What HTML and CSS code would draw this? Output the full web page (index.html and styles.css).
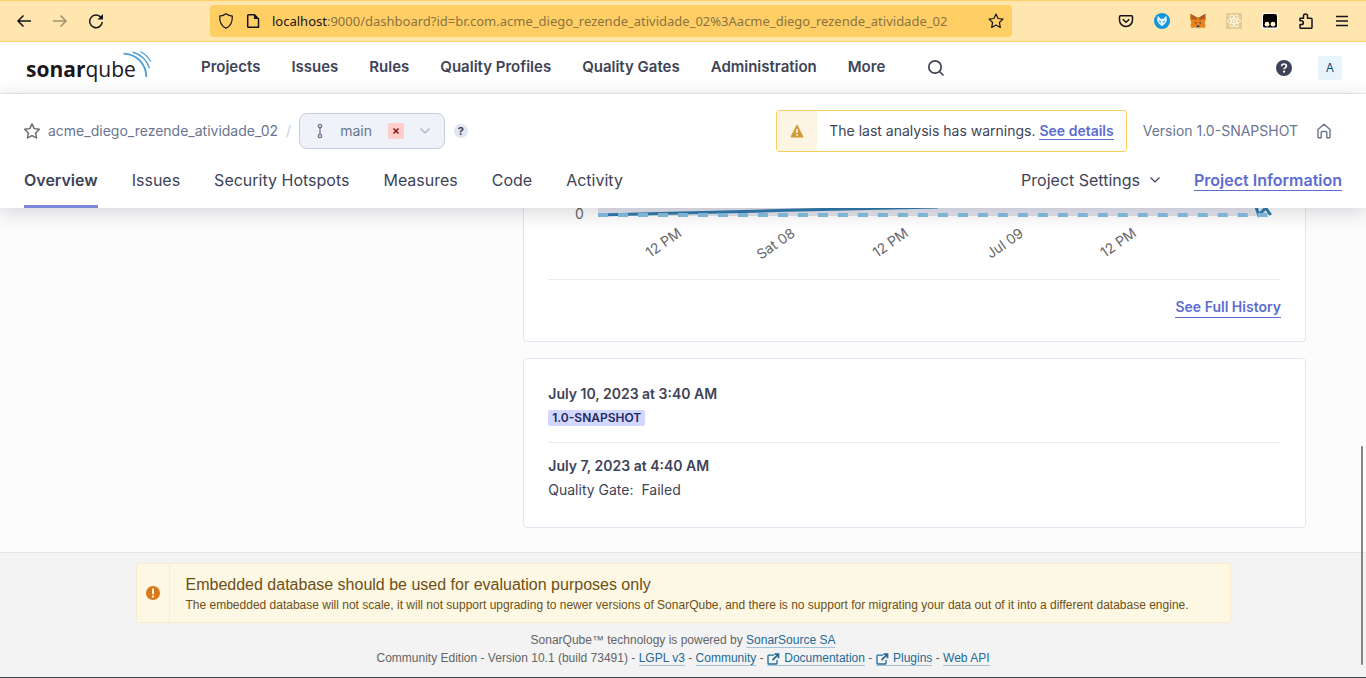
FILE: index.html
```html
<!DOCTYPE html>
<html lang="en">
<head>
<meta charset="utf-8">
<title>acme_diego_rezende_atividade_02</title>
<link rel="stylesheet" href="styles.css">
</head>
<body>
<div class="window">
  <div class="browser-bar">
    <div class="browser-nav">
      <button type="button" aria-label="Back"><svg width="16" height="16" viewBox="0 0 16 16"><path d="M15 8H2M7.500 2.500 2 8l5.500 5.500" class="line"/></svg></button>
      <button type="button" class="dim" aria-label="Forward"><svg width="16" height="16" viewBox="0 0 16 16"><path d="M1 8h13M8.500 2.500 14 8l-5.500 5.500" class="line"/></svg></button>
      <button type="button" aria-label="Reload"><svg width="16" height="16" viewBox="0 0 16 16"><path d="M13 4.500A6.300 6.300 0 1 0 14.300 9" class="line"/><path d="M15 1v5.500H9.500z" fill="currentColor"/></svg></button>
    </div>
    <div class="url-field">
      <svg width="16" height="18" viewBox="0 0 16 18"><path d="M8 1.700c2 1.500 4 2.200 6.300 2.400.3 5.500-1.600 10-6.300 12.200C3.300 14 1.400 9.600 1.700 4.100 4 3.900 6 3.200 8 1.700z" class="line thin"/></svg>
      <svg width="14" height="16" viewBox="0 0 14 16"><path d="M2.500 1.700h6l4 4v8.600h-10q-.8 0-.8-.8v-11q0-.8.800-.8z" class="line"/><path d="M8 1l5 5H8z" fill="currentColor"/></svg>
      <p class="url"><b>localhost</b>:9000/dashboard?id=br.com.acme_diego_rezende_atividade_02%3Aacme_diego_rezende_atividade_02</p>
      <button type="button" aria-label="Bookmark"><svg width="16" height="16" viewBox="0 0 16 16"><path d="M8 1l2.100 4.500 4.900.600-3.600 3.400.900 4.900L8 12l-4.300 2.400.9-4.900L1 6.100l4.900-.600z" class="line thin" stroke-linejoin="round"/></svg></button>
    </div>
    <div class="extensions">
      <button type="button" aria-label="Pocket"><svg width="16" height="16" viewBox="0 0 16 16"><path d="M2.500 2.700h11q1 0 1 1V7a6.500 6.500 0 0 1-13 0V3.700q0-1 1-1z" class="line"/><path d="M4.700 6.300 8 9.300l3.300-3" class="line"/></svg></button>
      <button type="button" aria-label="Blue fox extension"><svg width="16" height="16" viewBox="0 0 16 16"><circle cx="8" cy="8" r="8" fill="#1296db"/><path d="M3.800 2.800 6.500 5.800h3l2.700-3 .7 4.700-1.900 3.200L8 13.300l-3-2.600-1.900-3.200z" fill="#e3f3fc"/><path d="M5 8l2 1.300M11 8 9 9.300" stroke="#1296db"/></svg></button>
      <button type="button" aria-label="Wallet"><svg width="16" height="16" viewBox="0 0 16 16"><path d="M.5.800 6.200 4h3.600L15.500.8 16 6l-1.300 3.500.9 3-1.300 2.700-3.300-1-1 1H6l-1-1-3.300 1L.4 12.500l.9-3L0 6z" fill="#e8821e"/><path d="M.5.800 6.200 4 7 7 1.500 6zM15.500.8 9.800 4 9 7l5.500-1z" fill="#a85a26"/><path d="M5 9l2 .7-1.500 1zM11 9l-2 .7 1.500 1z" fill="#233447"/><path d="M6 12.500h4l-.3 2.500H6.300z" fill="#c0ad9e"/><path d="M6.600 12.500h2.800V14H6.600z" fill="#332b28"/></svg></button>
      <button type="button" aria-label="React tools"><svg width="16" height="16" viewBox="0 0 16 16"><path d="M0 0h16v16H0z" fill="#e3cd95"/><g fill="none" stroke="#fff7df"><ellipse cx="8" cy="8" rx="6.500" ry="2.500"/><ellipse cx="8" cy="8" rx="6.500" ry="2.500" transform="rotate(60 8 8)"/><ellipse cx="8" cy="8" rx="6.500" ry="2.500" transform="rotate(120 8 8)"/></g><circle cx="8" cy="8" r="1.300" fill="#fff7df"/></svg></button>
      <button type="button" aria-label="User scripts"><svg width="16" height="16" viewBox="0 0 16 16"><rect width="16" height="16" rx="2" fill="#fff"/><path d="M3 1h10q2 0 2 2v10q0 1.500-1.500 1.500h-11Q1 14.500 1 13V3q0-2 2-2z"/><circle cx="5" cy="11.200" r="2.400" fill="#fff3d0"/><circle cx="11" cy="11.200" r="2.400" fill="#fff3d0"/></svg></button>
      <button type="button" aria-label="Extensions"><svg width="16" height="16" viewBox="0 0 16 16"><path d="M2 5.300h3.500V3a2 2 0 0 1 4 0v2.300H13q1 0 1 1v8q0 1-1 1H2.800q-.8 0-.8-.8v-3h1.500a1.800 1.800 0 0 0 0-3.700H2z" class="line" stroke-linejoin="round"/></svg></button>
      <button type="button" aria-label="Menu"><svg width="16" height="16" viewBox="0 0 16 16"><path d="M2 3.500h12M2 8h12M2 12.500h12" class="line"/></svg></button>
    </div>
  </div>

  <header class="global-nav">
    <a class="logo" href="#" aria-label="SonarQube"><svg width="128" height="34" viewBox="-1 0 128 34"><text x="1" y="26" class="logo-text"><tspan class="logo-bold">sonar</tspan>qube</text><g fill="none" stroke="#4b9fd5"><path d="M98.500 2.600c13 .3 22.600 10 22.900 23.500" stroke-width="1.800"/><path d="M107.500 1c8.500 2.500 14.500 8.500 17 16.200" stroke-width="1.400"/><path d="M115.500.5c4.500 2.500 8 6 10.300 10.200" stroke-width="1.200"/></g></svg></a>
    <nav class="global-links">
      <a href="#">Projects</a><a href="#">Issues</a><a href="#">Rules</a><a href="#">Quality Profiles</a><a href="#">Quality Gates</a><a href="#">Administration</a><a href="#">More</a>
    </nav>
    <button type="button" class="search" aria-label="Search"><svg width="18" height="18" viewBox="0 0 18 18" fill="none" stroke="#3e4357" stroke-width="1.700"><circle cx="8" cy="8" r="6.200"/><path d="m12.500 12.500 4 4"/></svg></button>
    <div class="global-right">
      <button type="button" aria-label="Help"><svg width="16" height="16" viewBox="0 0 16 16"><circle cx="8" cy="8" r="8" fill="#3e4357"/><path d="M5.700 6.200C5.700 4.700 6.700 4 8 4s2.400.8 2.400 2.100c0 1.500-2.300 1.600-2.300 3.200" fill="none" stroke="#fff" stroke-width="1.700"/><circle cx="8.100" cy="11.700" r="1.100" fill="#fff"/></svg></button>
      <button type="button" class="avatar">A</button>
    </div>
  </header>

  <section class="project-header">
    <div class="project-row">
      <button type="button" class="favorite" aria-label="Favorite"><svg width="16" height="16" viewBox="0 0 16 16"><path d="M8 .900l2.200 4.700 5.100.700-3.700 3.600.9 5.100L8 12.600 3.500 15l.9-5.100L.7 6.300l5.100-.7z" fill="none" stroke="#666" stroke-width="1.400" stroke-linejoin="round"/></svg></button>
      <a class="project-name" href="#">acme_diego_rezende_atividade_02</a>
      <span class="slash">/</span>
      <button type="button" class="branch">
        <svg width="16" height="16" viewBox="0 0 16 16" fill="none" stroke="#6a7590" stroke-width="1.300"><circle cx="8" cy="3" r="1.700"/><circle cx="8" cy="13" r="1.700"/><path d="M8 4.700v6.600"/></svg>
        <span class="branch-name">main</span>
        <span class="failed"><svg width="8" height="8" viewBox="0 0 8 8"><path d="m1.500 1.500 5 5m0-5-5 5" stroke="#801b14" stroke-width="1.500"/></svg></span>
        <svg width="10" height="6" viewBox="0 0 10 6" fill="none" stroke="#a6adbf" stroke-width="1.200"><path d="m.5.500 4.500 4.500L9.500.5"/></svg>
      </button>
      <button type="button" class="hint" aria-label="Branch help">?</button>
      <div class="project-meta">
        <div class="warning"><span class="warning-icon"><svg width="14" height="14" viewBox="0 0 14 14"><path d="M7 1 13 13H1z" fill="#d29a35" stroke="#d29a35" stroke-linejoin="round"/><path d="M7 5v4M7 10.300v1.500" stroke="#fff" stroke-width="1.500"/></svg></span><p>The last analysis has warnings. <a class="link" href="#">See details</a></p></div>
        <span class="version">Version 1.0-SNAPSHOT</span>
        <button type="button" class="home" aria-label="Set as homepage"><svg width="16" height="16" viewBox="0 0 16 16"><path d="M2 6.500 8 1.200l6 5.300v7.700q0 .6-.6.6h-2.600V9.500q0-1-1-1H6.200q-1 0-1 1v5.300H2.600q-.6 0-.6-.6z" fill="none" stroke="#6a7590" stroke-width="1.400" stroke-linejoin="round"/></svg></button>
      </div>
    </div>
    <nav class="tabs">
      <a class="active" href="#">Overview</a><a href="#">Issues</a><a href="#">Security Hotspots</a><a href="#">Measures</a><a href="#">Code</a><a href="#">Activity</a>
      <div class="tabs-right">
        <button type="button">Project Settings <svg width="10" height="6" viewBox="0 0 10 6" fill="none" stroke="#3e4357" stroke-width="1.200"><path d="m.5.500 4.500 4.500L9.500.5"/></svg></button>
        <a class="link" href="#">Project Information</a>
      </div>
    </nav>
  </section>

  <main class="content">
    <div class="column">
      <section class="card history">
        <svg class="chart" viewBox="0 0 733 71" role="img" aria-label="Activity chart">
          <path d="M50 0h668v7H50z" fill="#e5e5f0"/>
          <path d="M50 7.500h668" stroke="#e1e1e1"/>
          <path d="M50 7Q170 4 240 2.300T390-1" fill="none" stroke="#2f7aaa" stroke-width="3"/>
          <path d="m708-2 3 9 7-7 5 7" fill="none" stroke="#2f7aaa" stroke-width="3"/>
          <path d="M50 7h670" stroke="#85bfe0" stroke-width="4" stroke-dasharray="10 10"/>
          <g class="tick"><text x="27" y="11">0</text>
          <text transform="translate(102 50) rotate(-35)">12 PM</text>
          <text transform="translate(213 52) rotate(-35)">Sat 08</text>
          <text transform="translate(329 50) rotate(-35)">12 PM</text>
          <text transform="translate(443 51) rotate(-35)">Jul 09</text>
          <text transform="translate(557 50) rotate(-35)">12 PM</text></g>
        </svg>
        <div class="history-link"><a class="link" href="#">See Full History</a></div>
      </section>
      <section class="card analyses">
        <article><h2>July 10, 2023 at 3:40 AM</h2><span class="tag">1.0-SNAPSHOT</span></article>
        <article><h2>July 7, 2023 at 4:40 AM</h2><p>Quality Gate: <span>Failed</span></p></article>
      </section>
    </div>
  </main>

  <footer class="footer">
    <div class="db-alert">
      <div class="db-icon"><svg width="14" height="14" viewBox="0 0 14 14"><circle cx="7" cy="7" r="7" fill="#db781a"/><path d="M7 2.500v5.700M7 9.500v2" stroke="#fff8e0" stroke-width="2"/></svg></div>
      <div class="db-text"><h2>Embedded database should be used for evaluation purposes only</h2><p>The embedded database will not scale, it will not support upgrading to newer versions of SonarQube, and there is no support for migrating your data out of it into a different database engine.</p></div>
    </div>
    <p class="foot-line">SonarQube™ technology is powered by <a href="#">SonarSource SA</a></p>
    <p class="foot-line">Community Edition - Version 10.1 (build 73491) - <a href="#">LGPL v3</a> - <a href="#">Community</a> - <a href="#"><svg width="14" height="12" viewBox="0 0 14 12"><use href="#external"/></svg> Documentation</a> - <a href="#"><svg width="14" height="12" viewBox="0 0 14 12"><g id="external" fill="none" stroke="#236a97" stroke-width="1.300"><path d="M7 2.200H1.700q-.7 0-.7.700v7.400q0 .7.700.7h7.600q.7 0 .7-.7V7"/><path d="M5.500 7.200 11 1.700M7.500 1.200h4v4" stroke-width="1.700"/></g></svg> Plugins</a> - <a href="#">Web API</a></p>
  </footer>
  <div class="scroll-thumb"></div>
</div>
</body>
</html>
```
FILE: styles.css
```css
* { box-sizing: border-box; }
body { margin: 0; background: #fcfcfd; color: #3e4357; font: 14px/20px Inter, sans-serif; }
h2, p { margin: 0; }
a { color: inherit; text-decoration: none; }
button { display: inline-flex; align-items: center; justify-content: center; padding: 0; border: 0; background: none; color: inherit; font: inherit; }
svg { display: block; flex: none; }
.window { position: relative; display: flex; flex-direction: column; min-height: 100vh; border-bottom: 1px solid #3e4357; }
.line { fill: none; stroke: currentColor; stroke-width: 1.5; }
.thin { stroke-width: 1.2; }

.browser-bar { display: flex; align-items: center; height: 42px; padding: 0 16px; border-top: 1px solid #ffcf66; border-bottom: 1px solid #ffcf66; background: #ffe6ae; color: #15141a; }
.browser-nav { display: flex; gap: 20px; width: 194px; }
.dim { opacity: .4; }
.url-field { display: flex; align-items: center; gap: 12px; flex: 0 1 802px; min-width: 0; height: 32px; padding: 0 8px; border-radius: 4px; background: #ffcf66; }
.url { flex: 1; overflow: hidden; white-space: nowrap; font: 400 13px/20px "Noto Sans", sans-serif; color: #8a7340; }
.url b { font-weight: 400; color: #15141a; }
.extensions { display: flex; gap: 20px; margin-left: auto; }

.global-nav { display: flex; align-items: center; height: 52px; padding: 0 24px; border-bottom: 1px solid #ebebeb; background: #fff; }
.logo { width: 177px; }
.logo-text { font: 21px "Open Sans", sans-serif; fill: #1b171b; }
.logo-bold { font-weight: 700; }
.global-links { display: flex; gap: 31px; padding-bottom: 2px; font-size: 15px; font-weight: 600; }
.search { margin-left: 42px; }
.global-right { display: flex; align-items: center; gap: 26px; margin-left: auto; }
.avatar { width: 24px; height: 24px; border-radius: 3px; background: #e8f4fb; color: #0b4f79; font-size: 12px; }

.project-header { position: relative; z-index: 1; padding: 16px 24px 0; background: #fff; box-shadow: 0 4px 20px rgba(29, 33, 47, .18); }
.project-row { display: flex; align-items: center; height: 42px; color: #6a7590; }
.project-name { margin-left: 8px; }
.slash { margin: 0 8px; color: #c5cdde; }
.branch { gap: 12px; height: 36px; padding: 0 14px 0 12px; border: 1px solid #c5cdde; border-radius: 8px; background: #eff2f9; }
.branch-name { margin: 0 4px 0 0; }
.failed { display: flex; align-items: center; justify-content: center; width: 16px; height: 16px; margin-right: 4px; border-radius: 2px; background: #ffcdca; }
.hint { width: 14px; height: 14px; margin-left: 9px; border-radius: 50%; background: #e1e6f3; color: #3e4357; font-size: 11px; font-weight: 700; }
.project-meta { display: flex; align-items: center; gap: 16px; margin-left: auto; padding-right: 8px; white-space: nowrap; }
.home { width: 20px; }
.warning { display: flex; align-items: center; height: 42px; padding-right: 12px; border: 1px solid #f8cf5f; border-radius: 3px; color: #3e4357; }
.warning-icon { display: flex; align-items: center; justify-content: center; width: 40px; height: 100%; margin-right: 12px; background: #fcf5e4; }
.link { border-bottom: 1px solid #5d6cd0; color: #5d6cd0; font-weight: 600; }
.tabs { display: flex; gap: 34px; height: 56px; font-size: 16px; line-height: 20px; }
.tabs > a { padding-top: 18px; }
.tabs .active { border-bottom: 3px solid #7b87d9; font-weight: 600; }
.tabs-right { display: flex; align-items: flex-start; gap: 34px; margin-left: auto; padding-top: 18px; }
.tabs-right button { gap: 10px; }

.content { flex: 1; display: grid; grid-template-columns: 4fr 7fr; gap: 16px; padding: 0 60px 24px; }
.column { grid-column: 2; display: flex; flex-direction: column; gap: 16px; }
.card { border: 1px solid #e1e6f3; border-radius: 4px; background: #fff; }
.history { padding: 0 24px 23px; border-top: 0; border-radius: 0 0 4px 4px; }
.chart { width: 100%; overflow: visible; }
.tick { font: 14px Inter, sans-serif; fill: #666; }
.history-link { display: flex; justify-content: flex-end; padding-top: 17px; border-top: 1px solid #ebebeb; }
.analyses { padding: 24px 24px 27px; }
.analyses article + article { margin-top: 16px; padding-top: 12px; border-top: 1px solid #ebebeb; }
.analyses h2 { font-size: 14px; line-height: 22px; font-weight: 600; }
.analyses article p { margin-top: 3px; }
.analyses p span { margin-left: 4px; }
.tag { display: block; width: fit-content; margin-top: 5px; padding: 0 4px; border-radius: 2px; background: #d1d7ff; color: #24295e; font-size: 12px; line-height: 16px; font-weight: 600; }

.footer { padding: 10px 20px 10px; border-top: 1px solid #e6e6e6; background: #f3f3f3; color: #656565; font: 12px/18px "Liberation Sans", sans-serif; text-align: center; }
.db-alert { display: flex; max-width: 1095px; margin: 0 auto 8px; border: 1px solid #faebcc; border-radius: 2px; background: #fcf8e3; color: #6f4f17; text-align: left; }
.db-icon { display: flex; align-items: center; justify-content: center; width: 33px; border-right: 1px solid #faebcc; }
.db-text { padding: 10px 16px 8px; }
.db-text h2 { font-size: 16px; line-height: 22px; font-weight: 400; }
.foot-line a { border-bottom: 1px solid #a0c1d6; color: #236a97; }
.foot-line svg { display: inline-block; vertical-align: -3px; }
.scroll-thumb { position: absolute; right: 3px; bottom: 12px; width: 2px; height: 219px; border-radius: 1px; background: #858585; z-index: 2; }
```
